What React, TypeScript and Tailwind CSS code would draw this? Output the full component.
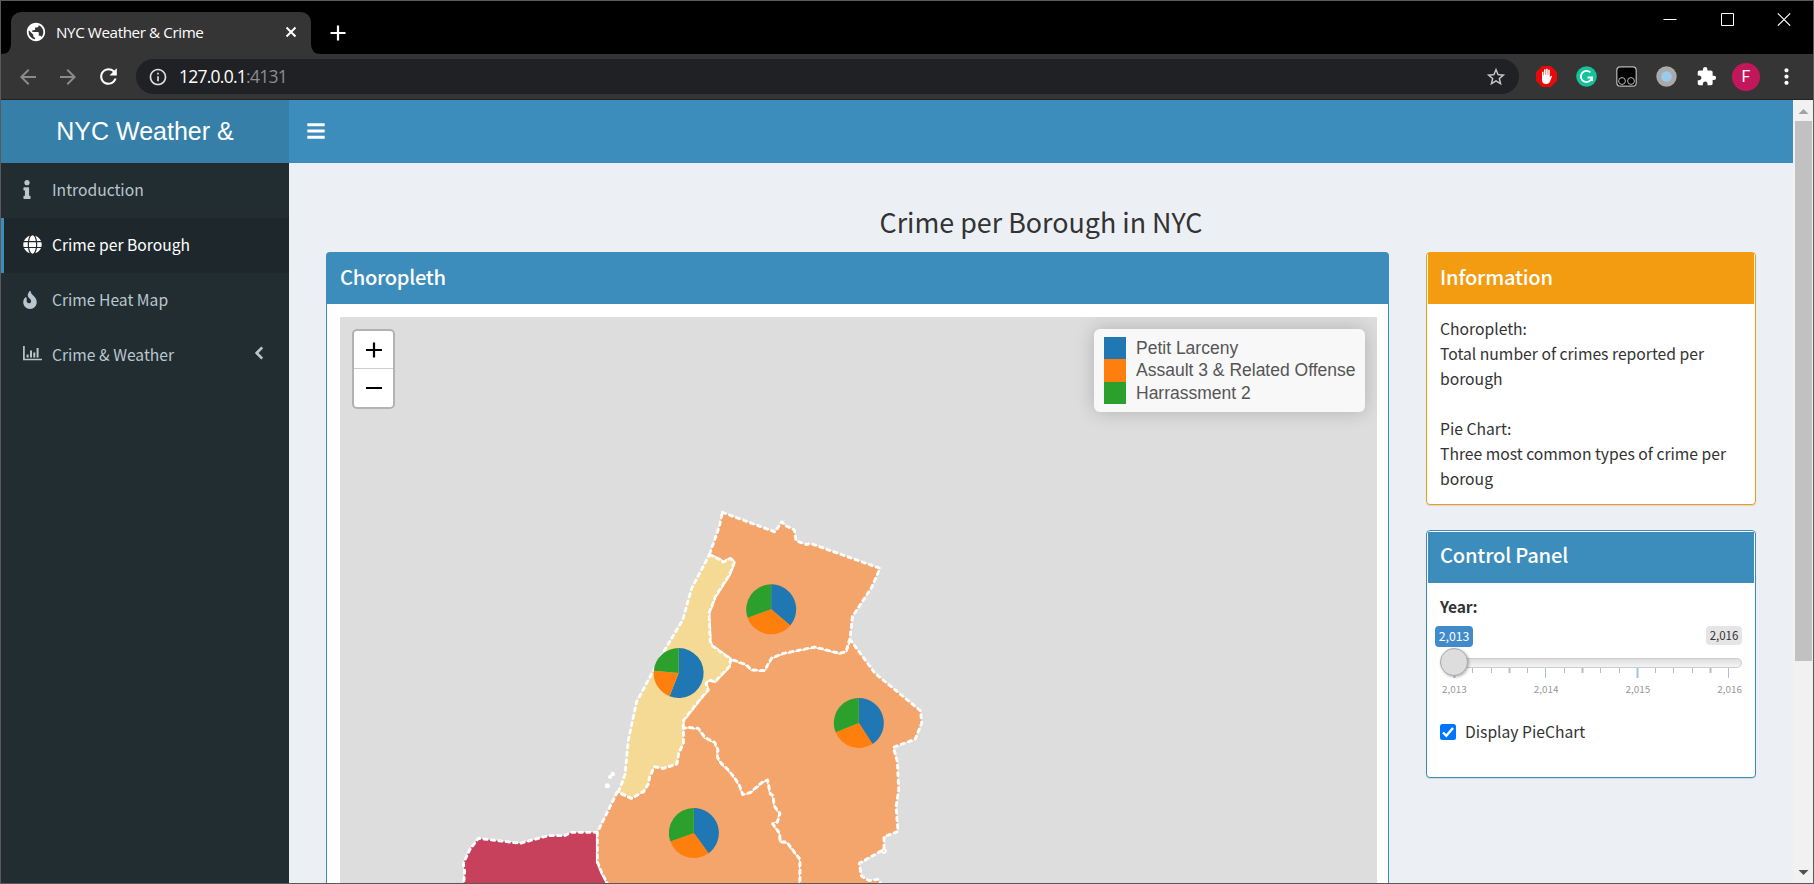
import React from "react";
import { FaInfo, FaGlobe, FaFire, FaBars, FaChevronLeft } from "react-icons/fa";
import { MdArrowBack, MdArrowForward, MdRefresh, MdExtension, MdStarBorder, MdMoreVert, MdInfoOutline, MdPublic } from "react-icons/md";

const SANS = "font-['Noto_Sans_CJK_JP',sans-serif]";

function TabStrip() {
  return (
    <div className="flex h-[53px] shrink-0 items-end bg-black">
      <div className="relative ml-[10px] flex h-[42px] w-[300px] items-center rounded-t-[10px] bg-[#353535] pb-[2px] pl-[14px] pr-[13px]">
        <MdPublic className="h-[22px] w-[22px] text-white" />
        <span className="ml-[9px] flex-1 whitespace-nowrap text-[15.200px] tracking-[-0.400px] text-white">NYC Weather &amp; Crime</span>
        <svg className="h-[14px] w-[14px]" viewBox="0 0 14 14" stroke="#fff" strokeWidth="2">
          <path d="M2.500 2.500l9 9M11.500 2.500l-9 9" />
        </svg>
        <svg className="absolute -left-[10px] bottom-0 h-[10px] w-[10px]" viewBox="0 0 10 10"><path fill="#353535" d="M10 0v10H0Q10 10 10 0" /></svg>
        <svg className="absolute -right-[10px] bottom-0 h-[10px] w-[10px]" viewBox="0 0 10 10"><path fill="#353535" d="M0 0v10H10Q0 10 0 0" /></svg>
      </div>
      <svg className="mb-[13px] ml-[19px] h-[16px] w-[16px]" viewBox="0 0 16 16" stroke="#fff" strokeWidth="2.200">
        <path d="M8 .5v15M.5 8h15" />
      </svg>
      <div className="ml-auto mr-[22px] flex h-[53px] items-start gap-[43px] pt-[11px]">
        <svg className="h-[14px] w-[14px]" viewBox="0 0 14 14" stroke="#fff"><path d="M.5 7.500h13" /></svg>
        <svg className="h-[14px] w-[14px]" viewBox="0 0 14 14" stroke="#fff" fill="none"><path d="M1.500 1.500h12v12h-12z" /></svg>
        <svg className="h-[14px] w-[14px]" viewBox="0 0 14 14" stroke="#fff" strokeWidth="1.200"><path d="M.8 1.300l12.400 12.400M13.200 1.300L.8 13.700" /></svg>
      </div>
    </div>
  );
}

function AddressBar() {
  return (
    <div className="flex h-[46px] shrink-0 items-center border-b border-[#222] bg-[#353535] pl-[15px] pr-[14px]">
      <MdArrowBack className="h-[24px] w-[24px] text-[#8b8b8b]" />
      <MdArrowForward className="ml-[16px] h-[24px] w-[24px] text-[#8b8b8b]" />
      <MdRefresh className="ml-[16px] h-[25px] w-[25px] text-white" />
      <div className="ml-[15px] flex h-[35px] w-[1384px] items-center rounded-full bg-[#202124] pl-[12px] pr-[12px]">
        <MdInfoOutline className="h-[20px] w-[20px] text-[#dedede]" />
        <span className="ml-[11px] flex-1 text-[17.500px] tracking-[-0.750px] text-white">127.0.0.1<span className="text-[#8a8d91]">:4131</span></span>
        <MdStarBorder className="h-[22px] w-[22px] text-[#c8c8c8]" />
      </div>
      <div className="ml-[17px] flex items-center gap-[19px]">
        <svg className="h-[21px] w-[21px]" viewBox="0 0 21 21">
          <path fill="#e60b0b" d="M6.200 0h8.600L21 6.200v8.600L14.800 21H6.200L0 14.800V6.200z" />
          <path fill="#fff" d="M6 11V6q.9-1.200 1.500 0v3.200h.5V3.700q.9-1.200 1.600 0v5h.5V3q.9-1.200 1.600 0v5.700h.5V4q.9-1.200 1.600 0v7.500l1-1.600q1.200-.6 1.200.6l-2.200 5.500q-1.100 2-3.500 2Q6 18 6 14z" />
        </svg>
        <svg className="h-[21px] w-[21px]" viewBox="0 0 21 21" fill="none">
          <circle cx="10.500" cy="10.500" r="10.300" fill="#15c39a" />
          <path stroke="#fff" strokeWidth="1.800" d="M14.300 6.300a5.600 5.600 0 1 0 1.700 5.200M11.500 11.500h4.500v3.600" />
        </svg>
        <svg className="h-[21px] w-[21px]" viewBox="0 0 21 21" stroke="#b9b9b9" fill="none">
          <rect x=".8" y=".8" width="19.400" height="19.400" rx="3.500" fill="#000" strokeWidth="1.200" />
          <circle cx="6" cy="15" r="3.400" /><circle cx="15" cy="15" r="3.400" />
        </svg>
        <svg className="h-[21px] w-[21px]" viewBox="0 0 21 21">
          <circle cx="10.500" cy="10.500" r="10.200" fill="#aaa" /><circle cx="10.500" cy="10.500" r="5.300" fill="#9acbee" />
        </svg>
        <MdExtension className="h-[21px] w-[21px] text-white" />
      </div>
      <div className="ml-[15px] flex h-[28px] w-[28px] items-center justify-center rounded-full bg-[#c2185b] font-['Roboto',sans-serif] text-[16px] text-white">F</div>
      <MdMoreVert className="ml-[14px] h-[25px] w-[25px] shrink-0 text-white" />
    </div>
  );
}

function ChartIcon() {
  return (
    <svg className="-mt-[2px] h-[15px] w-[19px]" viewBox="0 0 19 15" fill="none" stroke="currentColor">
      <path strokeWidth="1.700" d="M.9 0v13.500H19" />
      <path strokeWidth="2" d="M4.600 11.500V8.500M8 11.500V4.500M11.300 11.500V6.500M14.600 11.500V2" />
    </svg>
  );
}

function Sidebar() {
  const base = "flex h-[55px] items-center border-l-[3px] pb-[2px] pl-[19px] pr-[24px] ";
  const off = base + "border-transparent text-[#b8c7ce]";
  return (
    <nav className="w-[288px] shrink-0 bg-[#222d32] text-[15.670px]">
      <div className={off}><span className="w-[29px]"><FaInfo className="-ml-[5px] h-[19px] w-[18px]" /></span>Introduction</div>
      <div className={base + "border-[#3c8dbc] bg-[#1e282c] text-white"}><span className="w-[29px]"><FaGlobe className="h-[19px] w-[19px]" /></span>Crime per Borough</div>
      <div className={off}><span className="w-[29px]"><FaFire className="-ml-[2px] h-[18px] w-[18px]" /></span>Crime Heat Map</div>
      <div className={off}><span className="w-[29px]"><ChartIcon /></span><span className="flex-1">Crime &amp; Weather</span><FaChevronLeft className="-mt-[3px] h-[14px] w-[12px]" stroke="currentColor" strokeWidth="24" /></div>
    </nav>
  );
}

type Pie = { cx: number; cy: number; a: number; b: number };
const pies: Pie[] = [
  { cx: 513.5, cy: 328, a: 130, b: 250.6 },
  { cx: 236, cy: 519, a: 201.5, b: 275.4 },
  { cx: 776.5, cy: 669, a: 147, b: 248 },
  { cx: 281.5, cy: 999, a: 144, b: 250 },
];

function slice(p: Pie, from: number, to: number) {
  const r = 75;
  const pt = (d: number) => {
    const t = (d * Math.PI) / 180;
    return (p.cx + r * Math.sin(t)).toFixed(1) + " " + (p.cy - r * Math.cos(t)).toFixed(1);
  };
  return `M${p.cx} ${p.cy}L${pt(from)}A${r} ${r} 0 ${to - from > 180 ? 1 : 0} 1 ${pt(to)}Z`;
}

function BoroughMap() {
  return (
    <svg className="block h-full w-full" viewBox="-780 -549 3111 1698" preserveAspectRatio="none">
      <g stroke="#fff" strokeWidth="8.500" strokeDasharray="10 12.500" strokeLinejoin="round" strokeLinecap="round">
        <path fill="#c7415c" d="M-410 1165L-406 1115L-410 1090L-390 1048L-365 1015L-280 1025L-240 1030L-155 1007L-105 1007L-88 997L-8 997L-8 1085L5 1118L22 1150L30 1165Z" />
        <path fill="#f4a56c" d="M52 876L-8 997L-8 1085L5 1118L22 1150L30 1165L600 1165L600 1078L560 1026L541 1026L539 1000L518 971L532 967L540 940L524 920L518 885L511 882L503 840L490 844L450 878L428 883L418 855L405 835L385 810L362 788L352 770L354 750L344 727L315 713L295 685L262 682L250 685L250 730L236 760L230 792L190 805L163 800L148 832L146 850L130 875L94 895Z" />
        <path fill="#f4a56c" d="M750 418L825 520L920 598L962 633L965 670L945 718L880 742L892 785L896 870L888 920L894 994L852 1010L852 1048L778 1090L784 1128L808 1142L835 1138L850 1165L600 1165L600 1078L560 1026L541 1026L539 1000L518 971L532 967L540 940L524 920L518 885L511 882L503 840L490 844L450 878L428 883L418 855L405 835L385 810L362 788L352 770L354 750L344 727L315 713L295 685L262 682L250 685L250 662L305 592L325 570L318 552L325 540L345 545L388 500L392 477L440 495L453 509L493 512L515 474L550 460L645 441L718 460L738 455Z" />
        <path fill="#f4a56c" d="M367 37L525 96L546 65L553 75L583 90L588 122L620 134L630 130L840 205L815 262L757 350L750 415L738 455L718 460L645 441L550 460L515 474L493 512L453 509L440 495L392 477L335 436L331 425L327 338L335 320L345 292L388 225L403 188L392 175L370 186L355 176L328 164L358 80Z" />
        <path fill="#f5da95" d="M328 164L355 176L370 186L392 175L403 188L388 225L345 292L335 320L327 338L331 425L335 436L392 477L388 500L345 545L325 540L318 552L325 570L305 592L250 662L250 730L236 760L230 792L190 805L163 800L148 832L146 850L130 875L94 895L55 876L75 825L85 720L110 605L160 512L200 440L248 360L275 265Z" />
      </g>
      <g fill="#fff">
        <circle cx="22" cy="857" r="7.500" /><circle cx="38" cy="822" r="7" /><circle cx="30" cy="831" r="6" />
        <circle cx="852" cy="1053" r="5" fill="#f4a56c" stroke="#fff" strokeWidth="6" />
      </g>
      {pies.map((p) => (
        <g key={p.cx}>
          <path fill="#1f77b4" d={slice(p, 0, p.a)} />
          <path fill="#ff7f0e" d={slice(p, p.a, p.b)} />
          <path fill="#2ca02c" d={slice(p, p.b, 360)} />
        </g>
      ))}
    </svg>
  );
}

function Legend() {
  return (
    <div className="absolute right-[12px] top-[12px] h-[83px] w-[271px] rounded-[6px] bg-[#f8f8f8] px-[10px] pt-[8px] font-['Liberation_Sans',sans-serif] text-[17.500px] leading-[22.500px] text-[#555] shadow-[0_0_19px_rgba(0,0,0,0.2)]">
      <div className="flex h-[22px]"><i className="mr-[10px] w-[22px] bg-[#1f77b4]" />Petit Larceny</div>
      <div className="flex h-[23px] whitespace-nowrap"><i className="mr-[10px] w-[22px] shrink-0 bg-[#ff7f0e]" />Assault 3 &amp; Related Offense</div>
      <div className="flex h-[22px]"><i className="mr-[10px] w-[22px] bg-[#2ca02c]" />Harrassment 2</div>
    </div>
  );
}

function ZoomControl() {
  return (
    <div className="absolute left-[12px] top-[12px] flex h-[80px] w-[43px] flex-col rounded-[5px] border-[2.500px] border-[#b2b2b2] bg-white">
      <div className="flex h-[38px] items-center justify-center border-b border-[#ccc] pt-[1px]">
        <svg className="h-[16px] w-[16px]" viewBox="0 0 16 16" stroke="#000" strokeWidth="2.200"><path d="M8 .5v15M0 8h16" /></svg>
      </div>
      <div className="flex flex-1 items-center justify-center">
        <svg className="h-[16px] w-[16px]" viewBox="0 0 16 16" stroke="#000" strokeWidth="2"><path d="M0 8h16" /></svg>
      </div>
    </div>
  );
}

function Slider() {
  const ticks = Array.from({ length: 16 }, (_, i) => i);
  return (
    <div className="relative mt-[7px] h-[74px] w-[302px]">
      <div className="absolute -left-[5px] top-0 flex h-[21px] w-[38px] items-center justify-center rounded-[4px] bg-[#428bca] text-[12.300px] text-white">2,013</div>
      <div className="absolute right-0 top-0 flex h-[19px] w-[36px] items-center justify-center rounded-[4px] bg-[#e5e5e5] text-[11.500px] text-[#333]">2,016</div>
      <div className="absolute left-0 top-[32px] h-[10px] w-[302px] rounded-[10px] border border-[#ccc] bg-linear-to-b from-[#dedede] to-[#f5f5f5]" />
      <svg className="absolute left-0 top-[42px] h-[10px] w-[302px]" viewBox="0 0 302 10">
        {ticks.map((i) => {
          const x = Math.round(14 + i * 18.29) + 0.5;
          return i % 5 === 0
            ? <path key={i} d={`M${x} 0v10`} stroke="#9ec5e8" strokeWidth={i % 10 === 0 ? 2 : 1} />
            : <path key={i} d={`M${x} 0v5`} stroke="#bbb" strokeWidth={i === 3 || i === 7 || i === 14 ? 2 : 1} />;
        })}
      </svg>
      <div className="absolute left-0 top-[22px] h-[28px] w-[28px] rounded-full border border-[#ababab] bg-[#ddd] shadow-[1px_1px_3px_rgba(0,0,0,0.3)]" />
      <div className="absolute -left-[1px] top-[55px] flex w-[303px] justify-between pl-[3px] text-[9.900px] leading-[16px] text-[#999]">
        <span>2,013</span><span>2,014</span><span>2,015</span><span>2,016</span>
      </div>
    </div>
  );
}

function Content() {
  return (
    <main className="flex min-w-0 flex-1 flex-col bg-[#ecf0f5] text-[#333]">
      <h1 className="mt-[37px] h-[52px] shrink-0 text-center text-[26.860px] leading-[43px]">Crime per Borough in NYC</h1>
      <div className="flex min-h-0 flex-1 items-start pl-[37px]">
        <section className="flex h-full w-[1063px] flex-col rounded-t-[4px] border border-b-0 border-[#3c8dbc] bg-white">
          <h2 className="h-[51px] shrink-0 bg-[#3c8dbc] pl-[13px] text-[20.150px] font-medium leading-[48px] tracking-[-0.300px] text-white">Choropleth</h2>
          <div className="relative ml-[13px] mr-[11px] mt-[13px] min-h-0 flex-1 overflow-hidden bg-[#ddd]">
            <BoroughMap />
            <ZoomControl />
            <Legend />
          </div>
        </section>
        <div className="ml-[37px] flex w-[330px] flex-col gap-[25px]">
          <section className="h-[253px] rounded-[4px] border border-[#f39c12] bg-white shadow-[0_1px_1px_rgba(0,0,0,0.1)]">
            <h2 className="mx-px h-[51px] bg-[#f39c12] pl-[12px] text-[20.150px] font-medium leading-[48px] tracking-[-0.200px] text-white">Information</h2>
            <p className="pl-[13px] pt-[12px] text-[15.700px] leading-[25px]">
              Choropleth:<br />Total number of crimes reported per<br />borough<br /><br />Pie Chart:<br />Three most common types of crime per<br />boroug
            </p>
          </section>
          <section className="h-[248px] rounded-[4px] border border-[#3c8dbc] bg-white shadow-[0_1px_1px_rgba(0,0,0,0.1)]">
            <h2 className="mx-px mt-px h-[51px] bg-[#3c8dbc] pl-[12px] text-[20.150px] font-medium leading-[46px] tracking-[-0.200px] text-white">Control Panel</h2>
            <div className="pl-[13px] pt-[11px] text-[15.670px] leading-[25px]">
              <b className="tracking-[-0.200px]">Year:</b>
              <Slider />
              <label className="mt-[19px] flex items-center">
                <svg className="mr-[9px] mt-[1px] h-[16px] w-[16px]" viewBox="0 0 16 16">
                  <rect width="16" height="16" rx="2.500" fill="#0075ff" />
                  <path d="M3 8.500l3.300 3.300L13 4" fill="none" stroke="#fff" strokeWidth="2.400" />
                </svg>
                Display PieChart
              </label>
            </div>
          </section>
        </div>
      </div>
    </main>
  );
}

function Scrollbar() {
  return (
    <div className="flex w-[20px] shrink-0 flex-col items-center bg-[#f1f1f1]">
      <svg className="h-[21px] w-[20px] shrink-0" viewBox="0 0 20 21"><path fill="#a3a3a3" d="M5.500 14L10.500 9L15.500 14z" /></svg>
      <div className="ml-px h-[540px] w-[17px] bg-[#c1c1c1]" />
      <svg className="mt-auto h-[21px] w-[20px] shrink-0" viewBox="0 0 20 21"><path fill="#505050" d="M5.500 8L10.500 13L15.500 8z" /></svg>
    </div>
  );
}

export default function App() {
  return (
    <div className={"flex h-[884px] w-[1814px] flex-col overflow-hidden border border-[#5a5a5a] " + SANS}>
      <div className="flex shrink-0 flex-col font-['Open_Sans',sans-serif]">
        <TabStrip />
        <AddressBar />
      </div>
      <div className="flex min-h-0 flex-1">
        <div className="flex min-w-0 flex-1 flex-col">
          <header className="flex h-[63px] shrink-0">
            <div className="flex w-[288px] items-center justify-center bg-[#367fa9] font-['Liberation_Sans',sans-serif] text-[25px] text-white">NYC Weather &amp;</div>
            <div className="flex flex-1 items-center bg-[#3c8dbc] pb-[1px] pl-[18px]"><FaBars className="h-[20px] w-[18px] text-white" /></div>
          </header>
          <div className="flex min-h-0 flex-1">
            <Sidebar />
            <Content />
          </div>
        </div>
        <Scrollbar />
      </div>
    </div>
  );
}
